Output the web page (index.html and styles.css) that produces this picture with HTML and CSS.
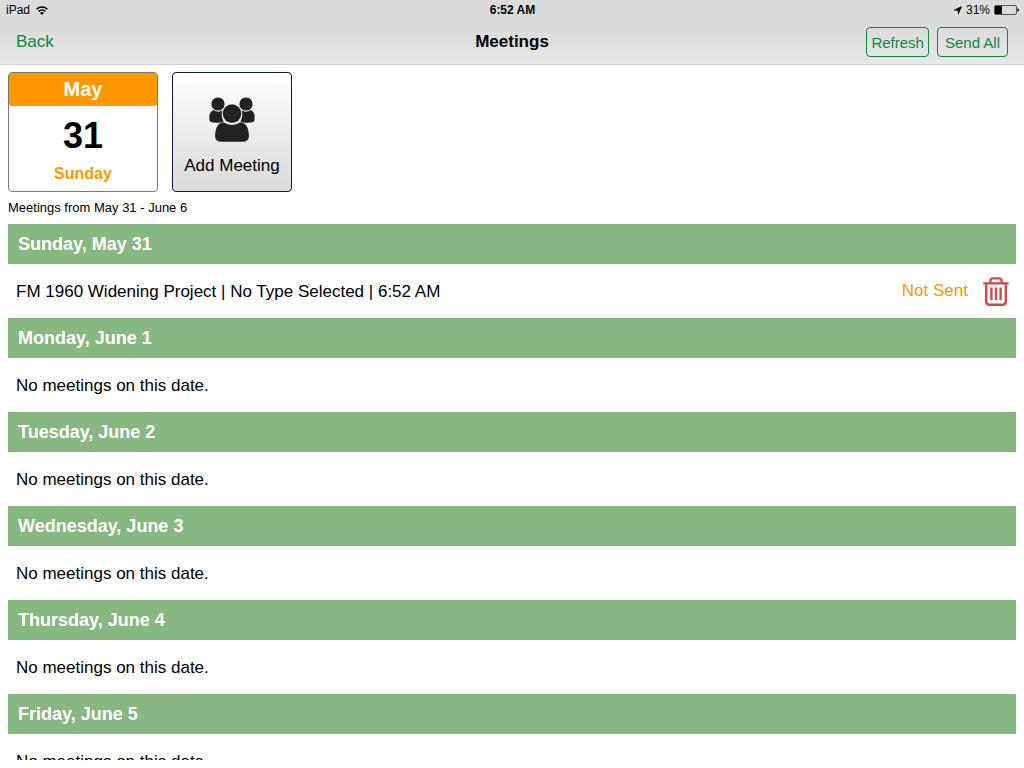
FILE: index.html
```html
<!DOCTYPE html>
<html lang="en">
<head>
<meta charset="utf-8">
<meta name="viewport" content="width=device-width, initial-scale=1">
<title>Meetings</title>
<link rel="stylesheet" href="styles.css">
</head>
<body>
<div class="app">
  <header class="top">
    <div class="status">
      <div class="status-left">
        <span>iPad</span>
        <svg class="wifi" viewBox="0 0 12 9" width="12" height="9" aria-hidden="true">
          <path d="M.6 3.3A7.6 7.6 0 0 1 11.4 3.3M2.6 5.4A4.8 4.8 0 0 1 9.4 5.4" fill="none" stroke="#000" stroke-width="1.5"/>
          <path d="M6 9 4 6.9A2.9 2.9 0 0 1 8 6.9Z"/>
        </svg>
      </div>
      <div class="status-time">6:52 AM</div>
      <div class="status-right">
        <svg class="location" viewBox="0 0 9 9" width="9" height="9" aria-hidden="true"><path d="M9 0 5.4 9 4.6 4.8 0 4.2Z"/></svg>
        <span>31%</span>
        <svg class="battery" viewBox="0 0 25 10" width="25" height="10" aria-hidden="true">
          <rect x=".5" y=".5" width="22" height="9" rx="1.5" fill="none" stroke="#555"/>
          <rect x="1" y="1" width="7" height="8"/>
          <path d="M23.4 3.3Q25 3.6 25 5T23.4 6.7Z"/>
        </svg>
      </div>
    </div>
    <nav class="nav">
      <a class="back" href="#">Back</a>
      <h1 class="title">Meetings</h1>
      <div class="actions">
        <button class="action" type="button">Refresh</button>
        <button class="action action-send" type="button">Send All</button>
      </div>
    </nav>
  </header>
  <main class="content">
    <div class="tiles">
      <div class="calendar">
        <div class="calendar-month">May</div>
        <div class="calendar-day">31</div>
        <div class="calendar-weekday">Sunday</div>
      </div>
      <button class="add" type="button">
        <svg class="people" viewBox="0 0 46 46" width="46" height="46" fill="#222" aria-hidden="true">
          <circle cx="9" cy="7" r="6.6"/>
          <circle cx="37" cy="7" r="6.6"/>
          <path d="M4.2 13Q9 16.2 13.4 13.6 11.6 19 14.6 24.6L12.4 25.4Q5 26.4 .8 24.4-1 15.6 4.2 13Z"/>
          <path d="M41.8 13Q37 16.2 32.6 13.6 34.4 19 31.4 24.6L33.6 25.4Q41 26.4 45.2 24.4 47 15.6 41.8 13Z"/>
          <circle cx="23" cy="16.6" r="9.3"/>
          <path d="M14.6 25.2Q23 31 31.4 25.2 39.9 26 39.9 39.8 39.4 44.8 33.6 44.8H12.4Q6.6 44.8 6.1 39.8 6.1 26 14.6 25.2Z"/>
        </svg>
        <span>Add Meeting</span>
      </button>
    </div>
    <p class="range">Meetings from May 31 - June 6</p>
    <section>
      <h2 class="day">Sunday, May 31</h2>
      <div class="row">
        <span class="row-text">FM 1960 Widening Project | No Type Selected | 6:52 AM</span>
        <span class="row-state">Not Sent</span>
        <button class="delete" type="button" aria-label="Delete meeting">
          <svg viewBox="0 0 26 29" width="26" height="29" fill="none" stroke="#d0494b" stroke-width="2.4" aria-hidden="true">
            <path d="M.3 6.4H25.7M3.2 6.4V24.6Q3.2 27.7 6.3 27.7H19.7Q22.8 27.7 22.8 24.6V6.4M7.4 6.4V3.8Q7.4 1.4 9.8 1.4H16.2Q18.6 1.4 18.6 3.8V6.4M8.4 10.6V23M13 10.6V23M17.6 10.6V23"/>
          </svg>
        </button>
      </div>
    </section>
    <section>
      <h2 class="day">Monday, June 1</h2>
      <div class="row"><span class="row-text">No meetings on this date.</span></div>
    </section>
    <section>
      <h2 class="day">Tuesday, June 2</h2>
      <div class="row"><span class="row-text">No meetings on this date.</span></div>
    </section>
    <section>
      <h2 class="day">Wednesday, June 3</h2>
      <div class="row"><span class="row-text">No meetings on this date.</span></div>
    </section>
    <section>
      <h2 class="day">Thursday, June 4</h2>
      <div class="row"><span class="row-text">No meetings on this date.</span></div>
    </section>
    <section>
      <h2 class="day">Friday, June 5</h2>
      <div class="row"><span class="row-text">No meetings on this date.</span></div>
    </section>
  </main>
</div>
</body>
</html>
```
FILE: styles.css
```css
* {
  box-sizing: border-box;
}

body {
  margin: 0;
  background: #fff;
  color: #000;
  font-family: "Liberation Sans", Arial, sans-serif;
  font-size: 17px;
}

button {
  margin: 0;
  font: inherit;
}

.app {
  display: flex;
  flex-direction: column;
  height: 100vh;
  padding-bottom: 8px;
}

.top {
  flex: none;
  border-bottom: 1px solid #d0d0d0;
  background: linear-gradient(#dcdcdc 45%, #e7e7e7);
}

.status,
.nav {
  display: grid;
  grid-template-columns: 1fr auto 1fr;
  align-items: center;
}

.status {
  height: 20px;
  padding: 0 5px 0 6px;
  font-size: 12px;
}

.status-left,
.status-right {
  display: flex;
  align-items: center;
  gap: 6px;
}

.status-right {
  justify-content: flex-end;
  gap: 4px;
}

.status-time {
  font-weight: bold;
}

.nav {
  height: 44px;
  padding: 0 16px;
}

.back {
  justify-self: start;
  color: #0c8843;
  text-decoration: none;
}

.title {
  margin: 0;
  font-size: 17px;
}

.actions {
  display: flex;
  justify-content: flex-end;
  gap: 8px;
}

.action {
  height: 30px;
  padding: 0 4px;
  border: 1px solid #0c8843;
  border-radius: 4px;
  background: transparent;
  color: #0c8843;
  font-size: 15px;
}

.action-send {
  padding: 0 7px;
}

.content {
  flex: 1;
  min-height: 0;
  overflow: hidden;
  padding: 7px 8px 0;
}

.tiles {
  display: flex;
  gap: 14px;
}

.calendar {
  width: 150px;
  height: 120px;
  border: 1px solid #777;
  border-radius: 4px;
  text-align: center;
  font-weight: bold;
}

.calendar-month {
  border-radius: 3px;
  background: #ff9800;
  color: #fff;
  font-size: 20px;
  line-height: 33px;
}

.calendar-day {
  font-size: 36px;
  line-height: 60px;
}

.calendar-weekday {
  color: #ff9800;
  font-size: 16px;
  line-height: 16px;
}

.add {
  display: flex;
  flex-direction: column;
  align-items: center;
  gap: 13px;
  width: 120px;
  height: 120px;
  padding: 24px 0 0;
  border: 1px solid #101a40;
  border-radius: 4px;
  background: linear-gradient(#fff, #dadada);
  color: #000;
  white-space: nowrap;
}

.range {
  margin: 0;
  font-size: 13px;
  line-height: 32px;
}

.day {
  margin: 0;
  padding: 0 10px;
  background: #88b881;
  color: #fff;
  font-size: 18px;
  line-height: 40px;
}

.row {
  display: flex;
  align-items: center;
  height: 54px;
  padding: 0 7px 0 8px;
}

.row-text {
  flex: 1;
  padding-top: 2px;
}

.row-state {
  color: #ff9800;
}

.delete {
  display: flex;
  margin-left: 15px;
  padding: 0;
  border: 0;
  background: none;
}
```
